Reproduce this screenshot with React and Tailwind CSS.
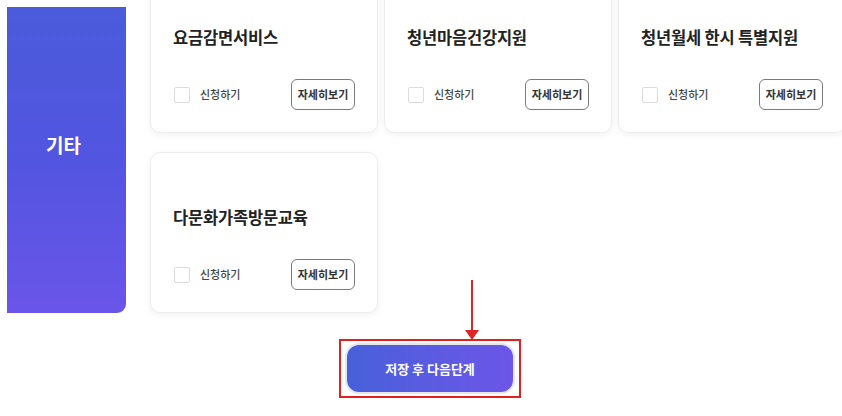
import React from "react";

const font = { fontFamily: '"Noto Sans CJK KR", "Noto Sans", sans-serif' };

function Card({ title }) {
  return (
    <div className="w-[228px] h-[161px] bg-white rounded-[10px] border border-[#ededed] shadow-[0_2px_6px_rgba(0,0,0,0.06)] flex flex-col pl-[22px] pr-[22px]">
      <div className="mt-[52px] h-[24px] leading-[24px] text-[16.5px] font-bold text-[#222] tracking-[-0.2px]">
        {title}
      </div>
      <div className="mt-auto mb-[22px] flex items-center justify-between">
        <div className="flex items-center gap-[10px] pl-[1px]">
          <div className="w-[16px] h-[16px] border border-[#dcdcdc] rounded-[2px] bg-white" />
          <span className="text-[11px] font-medium text-[#444]">신청하기</span>
        </div>
        <div className="w-[64px] h-[31px] border-[1.5px] border-[#7a7a7a] rounded-[6px] flex items-center justify-center text-[11px] font-bold text-[#333] bg-white">
          자세히보기
        </div>
      </div>
    </div>
  );
}

export default function App() {
  return (
    <div className="relative w-[842px] h-[416px] bg-white overflow-hidden" style={font}>
      <div className="flex items-start">
        <div className="shrink-0 ml-[7px] mt-[7px] w-[119px] h-[306px] rounded-br-[9px] bg-linear-to-b from-[#4a5bdb] via-[#5255e0] to-[#6a55e8] flex justify-center pt-[124px] pr-[6px]">
          <span className="text-white text-[19px] font-bold leading-[28px]">기타</span>
        </div>
        <div className="shrink-0 ml-[24px] mt-[-28px] grid grid-cols-[228px_228px_228px] gap-x-[6px] gap-y-[19px]">
          <Card title="요금감면서비스" />
          <Card title="청년마음건강지원" />
          <Card title="청년월세 한시 특별지원" />
          <Card title="다문화가족방문교육" />
        </div>
      </div>

      <svg className="absolute left-[464px] top-[280px]" width="16" height="61" viewBox="0 0 16 61">
        <line x1="8" y1="0" x2="8" y2="52" stroke="#e02424" strokeWidth="2" />
        <polygon points="1,50 15,50 8,60" fill="#e02424" />
      </svg>

      <div className="ml-[339px] mt-[26px] w-[182px] h-[59px] border-2 border-[#e3201f] flex items-center justify-center">
        <div className="w-[166px] h-[47px] rounded-[12px] bg-linear-to-r from-[#4760da] to-[#6c55e8] shadow-[0_0_0_2px_#e6e6ee] flex items-center justify-center text-white text-[13px] font-bold">
          저장 후 다음단계
        </div>
      </div>
    </div>
  );
}
